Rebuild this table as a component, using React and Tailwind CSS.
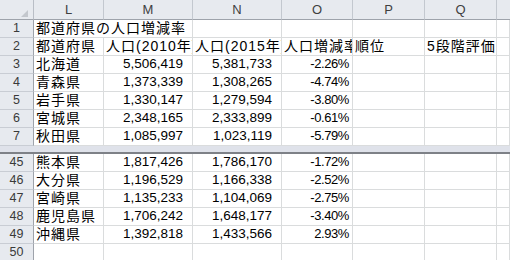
const COLS = [70, 89, 89, 71, 72, 72]
const LETTERS = ['L', 'M', 'N', 'O', 'P', 'Q']

const TOP = [
  ['3', '北海道', '5,506,419', '5,381,733', '-2.26%'],
  ['4', '青森県', '1,373,339', '1,308,265', '-4.74%'],
  ['5', '岩手県', '1,330,147', '1,279,594', '-3.80%'],
  ['6', '宮城県', '2,348,165', '2,333,899', '-0.61%'],
  ['7', '秋田県', '1,085,997', '1,023,119', '-5.79%'],
]

const BOTTOM = [
  ['45', '熊本県', '1,817,426', '1,786,170', '-1.72%'],
  ['46', '大分県', '1,196,529', '1,166,338', '-2.52%'],
  ['47', '宮崎県', '1,135,233', '1,104,069', '-2.75%'],
  ['48', '鹿児島県', '1,706,242', '1,648,177', '-3.40%'],
  ['49', '沖縄県', '1,392,818', '1,433,566', '2.93%'],
]

const font = "font-['Liberation_Sans','Noto_Sans_CJK_JP',sans-serif]"

function RowNum({ n }) {
  return (
    <div className="w-[34px] shrink-0 h-full flex items-end justify-center pb-[1px] bg-[#e7eaef] border-r border-r-[#9ea3ab] border-b border-b-[#c9cdd4] text-[12.5px] leading-[15px] text-[#3a3a3a]">
      {n}
    </div>
  )
}

function Cell({ w, children, align = 'left', pr = 'pr-[3px]', last }) {
  return (
    <div
      style={last ? undefined : { width: w }}
      className={`${last ? 'flex-1' : 'shrink-0'} h-full overflow-hidden whitespace-nowrap flex items-end pb-[1px] border-r border-b border-[#dadcdd] text-[14px] leading-[16px] text-black ${
        align === 'right' ? `justify-end ${pr}` : 'pl-[2px] tracking-[1px]'
      }`}
    >
      {children}
    </div>
  )
}

function Empties({ from }) {
  return (
    <>
      {COLS.slice(from).map((w, i) => (
        <Cell key={i} w={w} />
      ))}
      <Cell last />
    </>
  )
}

function DataRow({ r }) {
  return (
    <div className="flex h-[18px]">
      <RowNum n={r[0]} />
      <Cell w={COLS[0]}>{r[1]}</Cell>
      <Cell w={COLS[1]} align="right" pr="pr-[9px]">
        <span className="text-[13.5px]">{r[2]}</span>
      </Cell>
      <Cell w={COLS[2]} align="right" pr="pr-[9px]">
        <span className="text-[13.5px]">{r[3]}</span>
      </Cell>
      <Cell w={COLS[3]} align="right" pr="pr-[3px]">
        <span className="text-[13px] tracking-[-0.4px]">{r[4]}</span>
      </Cell>
      <Empties from={4} />
    </div>
  )
}

export default function App() {
  return (
    <div className={`w-[510px] h-[260px] overflow-hidden bg-white ${font}`}>
      {/* column header */}
      <div className="flex h-[20px]">
        <div className="relative w-[34px] shrink-0 h-full bg-[#e7eaef] border-r border-r-[#b9bec6] border-b border-b-[#9ea3ab]">
          <svg className="absolute left-[21px] top-[10px]" width="7" height="7" viewBox="0 0 7 7">
            <polygon points="7,0 7,7 0,7" fill="#c3c7cd" />
          </svg>
        </div>
        {COLS.map((w, i) => (
          <div
            key={i}
            style={{ width: w }}
            className="shrink-0 h-full flex items-center justify-center bg-[#e7eaef] border-r border-r-[#c3c8cf] border-b border-b-[#9ea3ab] text-[13px] text-[#3f3f3f]"
          >
            {LETTERS[i]}
          </div>
        ))}
        <div className="flex-1 h-full bg-[#e7eaef] border-b border-b-[#9ea3ab]" />
      </div>

      {/* row 1: title overflows into M */}
      <div className="flex h-[18px]">
        <RowNum n="1" />
        <Cell w={COLS[0] + COLS[1]}>都道府県の人口増減率</Cell>
        <Empties from={2} />
      </div>

      {/* row 2: headings */}
      <div className="flex h-[18px]">
        <RowNum n="2" />
        <Cell w={COLS[0]}>都道府県</Cell>
        <Cell w={COLS[1]}>人口(2010年)</Cell>
        <Cell w={COLS[2]}>人口(2015年)</Cell>
        <Cell w={COLS[3]}>人口増減率</Cell>
        <Cell w={COLS[4]}>順位</Cell>
        <Cell w={COLS[5]}>5段階評価</Cell>
        <Cell last />
      </div>

      {TOP.map((r) => (
        <DataRow key={r[0]} r={r} />
      ))}

      {/* frozen pane split */}
      <div className="h-[6px] bg-[#dfe2ea]" />
      <div className="h-[2px] bg-[#7e8187]" />

      {BOTTOM.map((r) => (
        <DataRow key={r[0]} r={r} />
      ))}

      <div className="flex h-[18px]">
        <RowNum n="50" />
        <Empties from={0} />
      </div>
    </div>
  )
}
